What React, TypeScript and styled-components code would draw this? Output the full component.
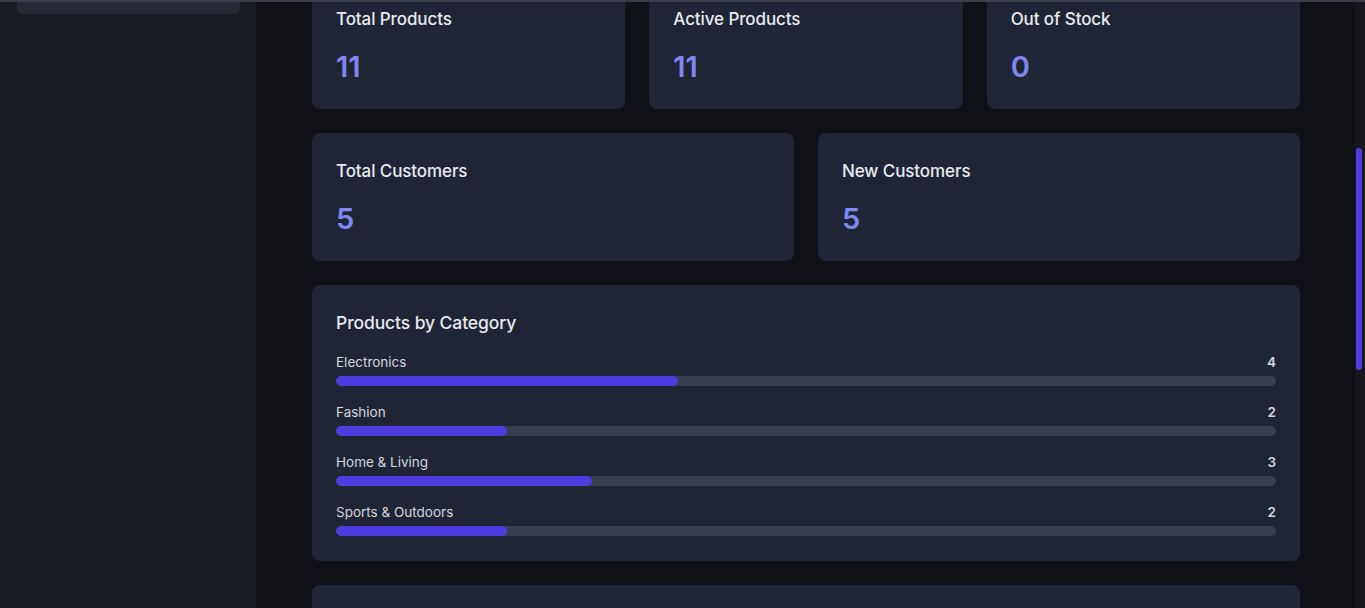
import React from 'react';
import styled, { createGlobalStyle } from 'styled-components';

const GlobalStyle = createGlobalStyle`
  html, body {
    margin: 0;
    padding: 0;
    height: 100%;
    overflow: hidden;
    background: #0f1116;
  }
  body {
    font-family: Inter, "Noto Sans", "Liberation Sans", sans-serif;
    color: #e5e7eb;
  }
  * { box-sizing: border-box; }
`;

const Shell = styled.div`
  display: flex;
  flex-direction: column;
  width: 1365px;
  height: 608px;
  overflow: hidden;
`;

const TopEdge = styled.div`
  height: 2px;
  flex-shrink: 0;
  background: #3a3e4a;
`;

const Body = styled.div`
  display: flex;
  flex: 1;
  min-height: 0;
`;

const Sidebar = styled.aside`
  width: 256px;
  flex-shrink: 0;
  background: #1a1d24;
  padding: 0 16px 0 17px;
`;

const SidebarItem = styled.div`
  height: 12px;
  border-radius: 0 0 6px 6px;
  background: #252a37;
`;

const Main = styled.main`
  flex: 1;
  min-width: 0;
  overflow: hidden;
  padding: 0 55px 0 56px;
`;

/* scrolled offset of the page content */
const Content = styled.div<{ $offset: number }>`
  display: flex;
  flex-direction: column;
  gap: 24px;
  margin-top: ${({ $offset }) => -$offset}px;
`;

const Grid = styled.div<{ $cols: number }>`
  display: grid;
  grid-template-columns: repeat(${({ $cols }) => $cols}, 1fr);
  gap: 24px;
`;

const Card = styled.div<{ $minHeight?: number }>`
  background: #1f2535;
  border-radius: 8px;
  padding: 24px;
  ${({ $minHeight }) => ($minHeight ? `min-height: ${$minHeight}px;` : '')}
`;

const ChartCard = styled(Card)`
  padding-bottom: 25px;
`;

const CardTitle = styled.h3`
  margin: 0;
  font-size: 17px;
  line-height: 28px;
  font-weight: 500;
  color: #e8eaef;
  letter-spacing: -0.1px;
`;

const StatValue = styled.div`
  margin-top: 16px;
  font-size: 29px;
  line-height: 36px;
  font-weight: 600;
  color: #7f86f2;
`;

const SectionTitle = styled(CardTitle)`
  font-size: 17.5px;
  margin-bottom: 15px;
`;

const CategoryList = styled.div`
  display: flex;
  flex-direction: column;
  gap: 16px;
`;

const CategoryRow = styled.div`
  display: flex;
  flex-direction: column;
  gap: 4px;
`;

const CategoryHead = styled.div`
  display: flex;
  justify-content: space-between;
  align-items: center;
  font-size: 13.5px;
  line-height: 20px;
  color: #d3d6dd;
`;

const Count = styled.span`
  font-weight: 600;
  color: #d3d6dd;
`;

const Track = styled.div`
  height: 10px;
  border-radius: 5px;
  background: #373e4d;
  overflow: hidden;
`;

const Fill = styled.div`
  height: 100%;
  border-radius: 5px;
  background: #4f3ce0;
`;

const ScrollTrack = styled.div`
  width: 10px;
  flex-shrink: 0;
  background: #15171c;
  padding: 146px 3px 0 1px;
`;

const ScrollThumb = styled.div`
  height: 222px;
  border-radius: 3px;
  background: #4f3ce0;
`;

const productStats = [
  { label: 'Total Products', value: 11 },
  { label: 'Active Products', value: 11 },
  { label: 'Out of Stock', value: 0 },
];

const customerStats = [
  { label: 'Total Customers', value: 5 },
  { label: 'New Customers', value: 5 },
];

const categories = [
  { name: 'Electronics', count: 4 },
  { name: 'Fashion', count: 2 },
  { name: 'Home & Living', count: 3 },
  { name: 'Sports & Outdoors', count: 2 },
];

const totalProducts = 11;

const StatCard = ({ label, value }: { label: string; value: number }) => (
  <Card>
    <CardTitle>{label}</CardTitle>
    <StatValue>{value}</StatValue>
  </Card>
);

export default function App() {
  return (
    <>
      <GlobalStyle />
      <Shell>
        <TopEdge />
        <Body>
          <Sidebar>
            <SidebarItem />
          </Sidebar>
          <Main>
            <Content $offset={21}>
              <Grid $cols={3}>
                {productStats.map((s) => (
                  <StatCard key={s.label} label={s.label} value={s.value} />
                ))}
              </Grid>
              <Grid $cols={2}>
                {customerStats.map((s) => (
                  <StatCard key={s.label} label={s.label} value={s.value} />
                ))}
              </Grid>
              <ChartCard>
                <SectionTitle>Products by Category</SectionTitle>
                <CategoryList>
                  {categories.map((c) => (
                    <CategoryRow key={c.name}>
                      <CategoryHead>
                        <span>{c.name}</span>
                        <Count>{c.count}</Count>
                      </CategoryHead>
                      <Track>
                        <Fill style={{ width: `${(c.count / totalProducts) * 100}%` }} />
                      </Track>
                    </CategoryRow>
                  ))}
                </CategoryList>
              </ChartCard>
              <Card $minHeight={200} />
            </Content>
          </Main>
          <ScrollTrack>
            <ScrollThumb />
          </ScrollTrack>
        </Body>
      </Shell>
    </>
  );
}
